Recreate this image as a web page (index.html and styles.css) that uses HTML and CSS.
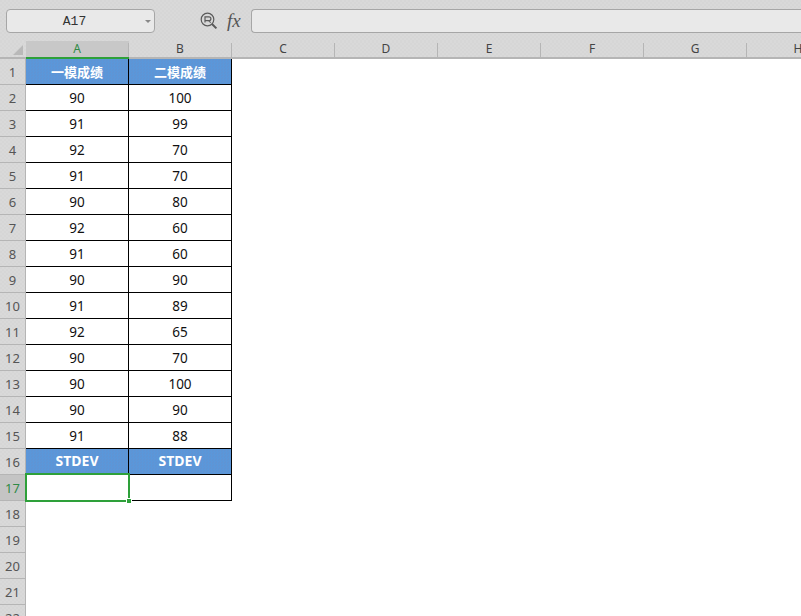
FILE: index.html
```html
<!DOCTYPE html>
<html lang="zh">
<head>
<meta charset="utf-8">
<title>STDEV</title>
<link rel="stylesheet" href="styles.css">
</head>
<body>
<div class="toolbar">
  <div class="namebox"><span class="name">A17</span><span class="caret"></span></div>
  <div class="tools">
    <svg class="zoom" width="18" height="18" viewBox="0 0 18 18" fill="none" stroke="#5a5a5a" stroke-width="1.2">
      <circle cx="7.5" cy="7.5" r="6.3"/>
      <path d="M5 10.5V4.8h4a1.9 1.9 0 0 1 0 3.8H5M8.5 8.6l2.2 2"/>
      <path d="M12 12l4.4 4.4" stroke-width="2"/>
    </svg>
    <span class="fx">fx</span>
  </div>
  <div class="formula"></div>
</div>
<div class="sheet">
  <div class="corner"><span class="tri"></span></div>
  <div class="colh sel">A</div><div class="colh">B</div><div class="colh">C</div><div class="colh">D</div><div class="colh">E</div><div class="colh">F</div><div class="colh">G</div><div class="colh">H</div>
</div>
<div class="body">
  <div class="rowheads">
    <div class="rowh">1</div><div class="rowh">2</div><div class="rowh">3</div><div class="rowh">4</div><div class="rowh">5</div><div class="rowh">6</div><div class="rowh">7</div><div class="rowh">8</div><div class="rowh">9</div><div class="rowh">10</div><div class="rowh">11</div><div class="rowh">12</div><div class="rowh">13</div><div class="rowh">14</div><div class="rowh">15</div><div class="rowh">16</div><div class="rowh sel">17</div><div class="rowh">18</div><div class="rowh">19</div><div class="rowh">20</div><div class="rowh">21</div><div class="rowh">22</div>
  </div>
  <div class="table">
    <div class="c head">一模成绩</div><div class="c head">二模成绩</div>
    <div class="c">90</div><div class="c">100</div>
    <div class="c">91</div><div class="c">99</div>
    <div class="c">92</div><div class="c">70</div>
    <div class="c">91</div><div class="c">70</div>
    <div class="c">90</div><div class="c">80</div>
    <div class="c">92</div><div class="c">60</div>
    <div class="c">91</div><div class="c">60</div>
    <div class="c">90</div><div class="c">90</div>
    <div class="c">91</div><div class="c">89</div>
    <div class="c">92</div><div class="c">65</div>
    <div class="c">90</div><div class="c">70</div>
    <div class="c">90</div><div class="c">100</div>
    <div class="c">90</div><div class="c">90</div>
    <div class="c">91</div><div class="c">88</div>
    <div class="c head stdev">STDEV</div><div class="c head stdev">STDEV</div>
    <div class="c active"><span class="selection"><span class="handle"></span></span></div><div class="c"></div>
  </div>
</div>
</body>
</html>
```
FILE: styles.css
```css
* { box-sizing: border-box; }
html, body { margin: 0; height: 100%; overflow: hidden; background: #fff; }
body { font-family: "Noto Sans", "Noto Sans CJK SC", sans-serif; font-size: 14px; color: #111; }

.toolbar { height: 41px; background: #d9d9d9 repeating-conic-gradient(#d9d9d9 0 25%, #d6d6d6 0 50%) 0 0 / 4px 4px; display: flex; align-items: flex-start; padding: 9px 0 0 6px; }
.namebox { width: 149px; height: 24px; flex: none; background: #e9e9e9; border: 1px solid #a6a6a6; border-radius: 4px; position: relative; display: flex; align-items: center; justify-content: center; padding-right: 12px; }
.name { font-family: "Liberation Mono", monospace; font-size: 13px; color: #333; }
.caret { position: absolute; right: 3px; top: 10px; border: 3px solid transparent; border-top: 3px solid #888; }
.tools { width: 96px; flex: none; height: 24px; display: flex; align-items: center; padding-left: 45px; gap: 9px; }
.zoom { flex: none; }
.fx { font-family: "Liberation Serif", serif; font-style: italic; font-size: 19px; color: #555; letter-spacing: 0; }
.formula { flex: 1; height: 24px; background: #e9e9e9; border: 1px solid #a6a6a6; border-right: 0; border-radius: 4px 0 0 4px; }

.sheet { height: 18px; background: #d9d9d9 repeating-conic-gradient(#d9d9d9 0 25%, #d6d6d6 0 50%) 0 0 / 4px 4px; display: flex; overflow: hidden; }
.corner { width: 26px; flex: none; position: relative; border-bottom: 2px solid #b5b5b5; }
.tri { position: absolute; right: 3px; bottom: 2px; width: 0; height: 0; border-left: 10px solid transparent; border-bottom: 10px solid #b9b9b9; }
.colh { width: 103px; flex: none; display: flex; align-items: center; justify-content: center; font-size: 12px; color: #444; border-bottom: 2px solid #b5b5b5; padding: 0 1px 1px 0; background: linear-gradient(#b5b5b5, #b5b5b5) right bottom / 1px 14px no-repeat; }
.colh.sel { background: #c8c8c8 linear-gradient(#b5b5b5, #b5b5b5) right bottom / 1px 14px no-repeat; color: #2f8a46; border-bottom-color: #2ea03a; }

.body { display: flex; align-items: flex-start; }
.rowheads { width: 26px; flex: none; height: 557px; overflow: hidden; background: #d9d9d9 repeating-conic-gradient(#d9d9d9 0 25%, #d6d6d6 0 50%) 0 0 / 4px 4px; border-right: 1px solid #b5b5b5; }
.rowh { height: 26px; display: flex; align-items: center; justify-content: center; font-size: 13px; color: #555; border-bottom: 1px solid #b5b5b5; }
.rowh.sel { background: #c4c4c4; color: #2f8a46; }

.table { display: grid; grid-template-columns: 103px 103px; grid-auto-rows: 26px; width: 206px; }
.c { display: flex; align-items: center; justify-content: center; border-right: 1px solid #000; border-bottom: 1px solid #000; font-size: 13.5px; color: #111; background: #fff; }
.c.head { background: #5a97da repeating-conic-gradient(#5a97da 0 25%, #5f94d4 0 50%) 0 0 / 3px 3px; color: #fff; font-weight: 700; font-size: 13px; }
.c.stdev { font-size: 14px; padding-bottom: 2px; }
.c.active { position: relative; }
.selection { position: absolute; left: -1px; top: -2px; width: 105px; height: 29px; border: 2px solid #2ea03a; }
.handle { position: absolute; right: -4px; bottom: -4px; width: 6px; height: 6px; background: #2ea03a; border: 1px solid #fff; }
```
